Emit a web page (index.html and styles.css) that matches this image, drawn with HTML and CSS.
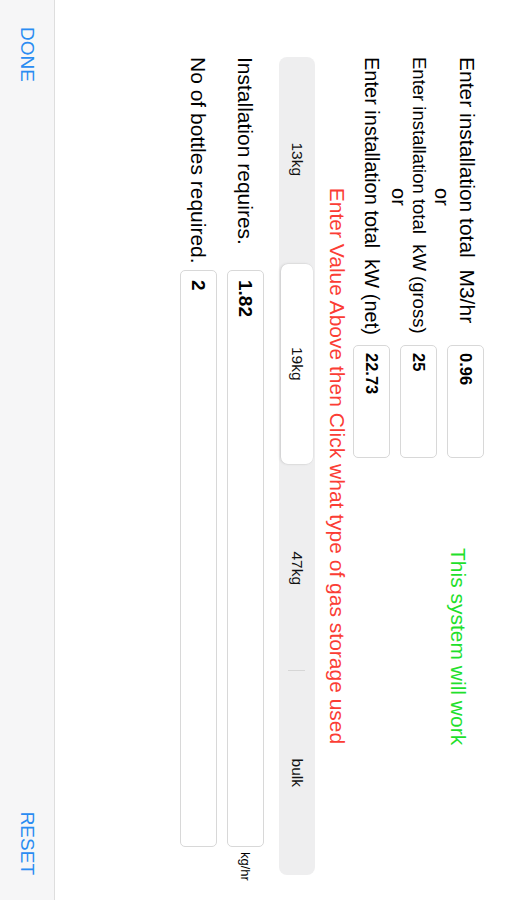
FILE: index.html
```html
<!DOCTYPE html>
<html lang="en">
<head>
    <meta charset="UTF-8">
    <meta name="viewport" content="width=device-width, initial-scale=1.0">
    <title>Gas Bottle Calculator</title>
    <link rel="stylesheet" href="styles.css">
</head>
<body>
    <div class="frame">
        <div class="screen">
            <div class="content">
                <div class="entry">
                    <div class="questions">
                        <div class="q q-m3">Enter installation total&nbsp; M3/hr</div>
                        <div class="or or-first">or</div>
                        <div class="q q-gross">Enter installation total&nbsp; kW (gross)</div>
                        <div class="or or-second">or</div>
                        <div class="q q-net">Enter installation total&nbsp; kW (net)</div>
                    </div>
                    <div class="inputs">
                        <input type="text" class="field small" value="0.96" readonly>
                        <input type="text" class="field small" value="25" readonly>
                        <input type="text" class="field small" value="22.73" readonly>
                    </div>
                    <div class="status">This system will work</div>
                </div>

                <div class="hint">Enter Value Above then Click what type of gas storage used</div>

                <div class="segmented">
                    <div class="seg">13kg</div>
                    <div class="seg active">19kg</div>
                    <div class="seg">47kg</div>
                    <div class="seg sep">bulk</div>
                </div>

                <div class="result">
                    <div class="result-label">Installation requires.</div>
                    <input type="text" class="field wide" value="1.82" readonly>
                    <div class="unit">kg/hr</div>
                </div>
                <div class="result">
                    <div class="result-label">No of bottles required.</div>
                    <input type="text" class="field wide" value="2" readonly>
                </div>
            </div>

            <div class="toolbar">
                <button class="tool-btn">DONE</button>
                <button class="tool-btn">RESET</button>
            </div>
        </div>
    </div>
</body>
</html>
```

FILE: styles.css
```css
html, body {
    margin: 0;
    padding: 0;
    background: #fff;
    overflow: hidden;
}
body {
    font-family: "Liberation Sans", Arial, sans-serif;
    color: #000;
}
.frame {
    width: 507px;
    height: 900px;
    overflow: hidden;
}
/* the app is shown in landscape, turned a quarter clockwise */
.screen {
    width: 900px;
    height: 507px;
    display: flex;
    flex-direction: column;
    transform-origin: 0 0;
    transform: translateX(507px) rotate(90deg);
}
.content {
    flex: 1;
    padding-left: 57px;
}
.entry {
    display: flex;
    height: 158px;
}
.questions {
    width: 280px;
}
.q {
    white-space: nowrap;
}
.q-m3 {
    font-size: 21px;
    line-height: 24px;
    margin-top: 28px;
}
.q-gross {
    font-size: 18.5px;
    line-height: 19px;
}
.q-net {
    font-size: 20px;
    line-height: 32px;
}
.or {
    font-size: 20px;
    text-align: center;
}
.or-first {
    line-height: 26px;
}
.or-second {
    line-height: 22px;
}
.inputs {
    margin-left: 8px;
    padding-top: 23px;
    display: flex;
    flex-direction: column;
    gap: 10px;
}
.field {
    box-sizing: border-box;
    height: 37px;
    margin: 0;
    border: 1px solid #d8d8d8;
    border-radius: 5px;
    background: #fff;
    font-family: "Liberation Sans", Arial, sans-serif;
    font-weight: bold;
    color: #000;
    outline: none;
}
.field.small {
    width: 113px;
    font-size: 16.5px;
    padding: 0 7px;
}
.field.wide {
    width: 577px;
    font-size: 19px;
    padding: 0 9px;
}
.status {
    margin-left: 90px;
    margin-top: 37px;
    font-size: 21px;
    line-height: 24px;
    color: #1fe02c;
    white-space: nowrap;
}
.hint {
    width: 818px;
    text-align: center;
    font-size: 21px;
    line-height: 24px;
    color: #fb3d35;
    white-space: nowrap;
}
.segmented {
    width: 818px;
    box-sizing: border-box;
    margin-top: 10px;
    padding: 2px;
    display: grid;
    grid-template-columns: repeat(4, 1fr);
    gap: 4px;
    background: #eeeeef;
    border-radius: 8px;
}
.seg {
    position: relative;
    height: 32px;
    line-height: 32px;
    text-align: center;
    font-size: 15.5px;
    color: #111;
    border-radius: 7px;
}
.seg.active {
    background: #fff;
    box-shadow: 0 1px 3px rgba(0, 0, 0, 0.12), 0 0 0 0.5px rgba(0, 0, 0, 0.05);
}
.seg.sep::before {
    content: "";
    position: absolute;
    left: -3px;
    top: 8px;
    bottom: 7px;
    width: 1px;
    background: #d6d6d6;
}
.result {
    display: flex;
    align-items: center;
    margin-top: 15px;
}
.result + .result {
    margin-top: 10px;
}
.result-label {
    width: 208px;
    margin-right: 5px;
    font-size: 21px;
    white-space: nowrap;
}
.unit {
    margin-left: 5px;
    font-size: 13px;
}
.toolbar {
    height: 54px;
    flex-shrink: 0;
    border-top: 1px solid #dedede;
    background: #f6f6f7;
    display: flex;
    align-items: center;
    justify-content: space-between;
    padding: 0 25px 0 27px;
}
.tool-btn {
    border: none;
    background: none;
    padding: 0;
    font-family: "Liberation Sans", Arial, sans-serif;
    font-size: 19px;
    color: #2a8cf2;
    cursor: pointer;
}
```
